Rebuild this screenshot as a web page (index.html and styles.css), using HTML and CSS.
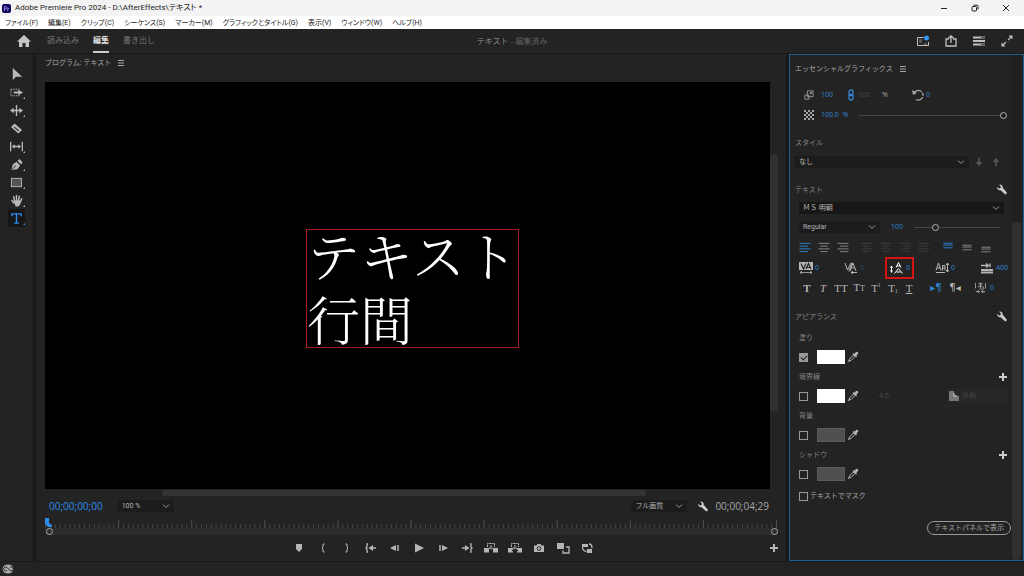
FILE: index.html
```html
<!DOCTYPE html>
<html lang="ja">
<head>
<meta charset="utf-8">
<title>Adobe Premiere Pro 2024</title>
<link rel="stylesheet" href="styles.css">
</head>
<body>
<svg class="defs" aria-hidden="true">
  <symbol id="chev" viewBox="0 0 8 8"><path d="M1 2.5l3 3 3-3" fill="none" stroke="currentColor"/></symbol>
  <symbol id="menu" viewBox="0 0 8 8"><path d="M1 1.500h6M1 4h6M1 6.500h6" stroke="currentColor"/></symbol>
  <symbol id="plus" viewBox="0 0 8 8"><path d="M4 0v8M0 4h8" stroke="currentColor" stroke-width="2"/></symbol>
  <symbol id="wrench" viewBox="0 0 12 12"><path d="M1 3l2 2 1.800-.5.4-2L3.500.8C5.500.2 7.500 1.500 7.300 4l4.200 5c.8 1.500-.8 2.800-2 1.800L5 6.800C3 7.300.8 5.500 1 3z" fill="currentColor"/></symbol>
  <symbol id="dropper" viewBox="0 0 12 12"><path d="M2 10l.5-2 4-4L8 5.500l-4 4z" fill="none" stroke="currentColor"/><path d="M5.500 3l1-1 1 .7L9 1c1.200-1 3 .8 2 2L9.400 4.500l.6 1-1 1z" fill="currentColor"/><path d="M1 11l1-1.500" stroke="currentColor"/></symbol>
  <symbol id="lines" viewBox="0 0 12 12"><path d="M0 1.500h12M0 4.500h9M0 7.500h12M0 10.500h9" stroke="currentColor"/></symbol>
  <symbol id="linesc" viewBox="0 0 12 12"><path d="M0 1.500h12M2 4.500h8M0 7.500h12M2 10.500h8" stroke="currentColor"/></symbol>
  <symbol id="linesr" viewBox="0 0 12 12"><path d="M0 1.500h12M3 4.500h9M0 7.500h12M3 10.500h9" stroke="currentColor"/></symbol>
  <symbol id="lines3" viewBox="0 0 12 12"><path d="M1 3.500h10M1 5.500h10M1 8.500h10" stroke="currentColor"/></symbol>
</svg>

<header class="titlebar">
  <svg class="logo" viewBox="0 0 9 9"><rect width="9" height="9" rx="2" fill="#12055c"/><path d="M2.500 7V2.500h1c1.800 0 1.800 2.300 0 2.300h-1M5.700 7V4.300M5.700 5.200q.3-.8 1.300-.8" fill="none" stroke="#a9a0f5" stroke-width=".8"/></svg>
  <h1 class="title">Adobe Premiere Pro 2024 - D:\AfterEffects\テキスト *</h1>
  <div class="winbtns">
    <button aria-label="最小化"><svg viewBox="0 0 8 8"><path d="M1 4.500h6" stroke="currentColor"/></svg></button>
    <button aria-label="元に戻す"><svg viewBox="0 0 8 8"><rect x="1" y="2.500" width="4.500" height="4.500" rx="1" fill="none" stroke="currentColor"/><path d="M2.500 1.200H6q1 0 1 1v3.300" fill="none" stroke="currentColor"/></svg></button>
    <button aria-label="閉じる"><svg viewBox="0 0 8 8"><path d="M1 1l6 6M7 1L1 7" stroke="currentColor"/></svg></button>
  </div>
</header>
<nav class="menubar">
  <button>ファイル(F)</button><button>編集(E)</button><button>クリップ(C)</button><button>シーケンス(S)</button><button>マーカー(M)</button><button>グラフィックとタイトル(G)</button><button>表示(V)</button><button>ウィンドウ(W)</button><button>ヘルプ(H)</button>
</nav>

<div class="appbar">
  <nav class="tabs">
    <button class="home" aria-label="ホーム"><svg viewBox="0 0 14 12"><path d="M7 0L0 6.500h2V12h3.500V8h3v4H12V6.500h2z" fill="currentColor"/></svg></button>
    <button>読み込み</button><button class="active">編集</button><button>書き出し</button>
  </nav>
  <p class="doc">テキスト <span>- 編集済み</span></p>
  <div class="appicons">
    <button aria-label="ワークスペース"><svg viewBox="0 0 12 12"><path d="M6.500 2.500h-6v8h11V7" fill="none" stroke="currentColor"/><path d="M2 5h3M2 7h3M7 9h3" stroke="#888"/><circle cx="9.500" cy="3" r="2.500" fill="#2f96f3"/></svg></button>
    <button aria-label="クイック書き出し"><svg viewBox="0 0 12 12"><path d="M4 4H1v7h10V4H8M6 8V1M3.500 3.200L6 .8l2.500 2.400" fill="none" stroke="currentColor" stroke-width="1.300"/></svg></button>
    <button aria-label="ワークスペース設定"><svg viewBox="0 0 12 12"><path d="M0 2.500h12M0 6h12M0 9.500h12" stroke="currentColor" stroke-width="2"/><path d="M8 2.500h4M8 9.500h4" stroke="#555"/></svg></button>
    <button aria-label="全画面"><svg viewBox="0 0 12 12"><path d="M7 5l3-3M5 7l-3 3" stroke="currentColor" stroke-width="1.300"/><path d="M7.500.5h4v4zM.5 7.500v4h4z" fill="currentColor"/></svg></button>
  </div>
</div>

<main class="workspace">
  <aside class="tools">
    <button aria-label="選択ツール"><svg viewBox="0 0 14 14"><path d="M3 0v13l3.500-3.500H13z" fill="currentColor"/></svg></button>
    <button class="more" aria-label="トラックの前方選択"><svg viewBox="0 0 14 14"><path d="M1 3.500h9v1M1 3.500v7h9v-1" fill="none" stroke="currentColor" stroke-dasharray="1.500 1"/><path d="M4 6h5V4l5 3-5 3V8H4z" fill="currentColor"/></svg></button>
    <button class="more" aria-label="リップルツール"><svg viewBox="0 0 14 14"><path d="M7 1v12M2 7h10" stroke="currentColor" stroke-width="1.500"/><path d="M0 7l4-3v6zM14 7l-4-3v6z" fill="currentColor"/></svg></button>
    <button aria-label="レーザーツール"><svg viewBox="0 0 14 14"><path d="M5 1.500l8 7-4 4-8-7z" fill="currentColor"/><path d="M4.500 5.500l5 4" stroke="#232323" stroke-width="1.200"/></svg></button>
    <button class="more" aria-label="スリップツール"><svg viewBox="0 0 14 14"><path d="M.7 2v10M13.300 2v10M4 7h6" stroke="currentColor" stroke-width="1.400"/><path d="M2 7l3-2.500v5zM12 7L9 4.500v5z" fill="currentColor"/></svg></button>
    <button class="more" aria-label="ペンツール"><svg viewBox="0 0 14 14"><path d="M1.500 13L3 7l4-3 4 4-3 4zM8 3l2-2 3.500 3.500L12 7z" fill="currentColor"/><path d="M2 12.500L6.500 8" stroke="#232323"/></svg></button>
    <button class="more" aria-label="長方形ツール"><svg viewBox="0 0 14 14"><rect x="1.500" y="2.500" width="11" height="9" fill="#555" stroke="currentColor"/></svg></button>
    <button class="more" aria-label="手のひらツール"><svg viewBox="0 0 14 14"><path d="M5 8L4 3M7 7.500V1.500M9 8l1-5.500M11 9l1.500-4M4.500 10L2 7" fill="none" stroke="currentColor" stroke-width="1.600" stroke-linecap="round"/><path d="M4 7h7.500l-.5 4-2 2.500H6z" fill="currentColor"/></svg></button>
    <button class="more selected" aria-label="横書き文字ツール"><svg viewBox="0 0 14 14"><path d="M2 4.500V2h10v2.500M7 2v10M4.500 12h5" fill="none" stroke="currentColor" stroke-width="1.500"/></svg></button>
  </aside>

  <section class="program">
    <h2 class="paneltitle">プログラム: テキスト <svg><use href="#menu"/></svg></h2>
    <div class="monitor">
      <div class="screen"><p class="caption"><span>テキスト<br>行間</span></p></div>
      <div class="vscroll"><i></i></div>
    </div>
    <div class="hscroll"><i></i></div>
    <div class="timerow">
      <time class="current">00;00;00;00</time>
      <label class="pick zoomsel"><select aria-label="ズーム"><option>100 %</option></select><svg><use href="#chev"/></svg></label>
      <label class="pick quality"><select aria-label="再生時の解像度"><option>フル画質</option></select><svg><use href="#chev"/></svg></label>
      <button class="wrench" aria-label="設定"><svg><use href="#wrench"/></svg></button>
      <time>00;00;04;29</time>
    </div>
    <div class="ruler">
      <svg class="ticks" viewBox="0 0 725 10" preserveAspectRatio="none"><path d="M0 8h725" stroke="#484848" stroke-width="4" stroke-dasharray="1 3.820"/><path d="M72.300 5h652" stroke="#4c4c4c" stroke-width="9" stroke-dasharray="1 71.300"/></svg>
      <div class="range"><i></i><i></i></div>
      <svg class="playhead" viewBox="0 0 7 9"><path d="M0 0h4v5l3 2v2H3L0 6z" fill="#2d8ceb"/></svg>
    </div>
    <div class="transport">
      <div class="keys">
        <button aria-label="マーカー"><svg viewBox="0 0 14 12"><path d="M4 2h6v5L7 10 4 7z" fill="currentColor"/></svg></button>
        <button aria-label="インをマーク"><svg viewBox="0 0 14 12"><path d="M8.500 2H7v3L6 6l1 1v3h1.500" fill="none" stroke="currentColor"/></svg></button>
        <button aria-label="アウトをマーク"><svg viewBox="0 0 14 12"><path d="M5.500 2H7v3l1 1-1 1v3H5.500" fill="none" stroke="currentColor"/></svg></button>
        <button aria-label="インへ移動"><svg viewBox="0 0 14 12"><path d="M4 2H3v3L2 6l1 1v3h1M7 6h5" fill="none" stroke="currentColor" stroke-width="1.300"/><path d="M4.500 6L9 3v6z" fill="currentColor"/></svg></button>
        <button aria-label="1フレーム前へ"><svg viewBox="0 0 14 12"><path d="M2 6l6-3v6z" fill="currentColor"/><path d="M10 3v6" stroke="currentColor" stroke-width="1.500"/></svg></button>
        <button aria-label="再生"><svg viewBox="0 0 14 12"><path d="M3 1.500L12 6l-9 4.500z" fill="currentColor"/></svg></button>
        <button aria-label="1フレーム先へ"><svg viewBox="0 0 14 12"><path d="M12 6L6 3v6z" fill="currentColor"/><path d="M4 3v6" stroke="currentColor" stroke-width="1.500"/></svg></button>
        <button aria-label="アウトへ移動"><svg viewBox="0 0 14 12"><path d="M10 2h1v3l1 1-1 1v3h-1M2 6h5" fill="none" stroke="currentColor" stroke-width="1.300"/><path d="M9.500 6L5 3v6z" fill="currentColor"/></svg></button>
        <button aria-label="リフト"><svg viewBox="0 0 14 12"><path d="M0 6h5v4.500H0zM9 6h5v4.500H9z" fill="currentColor"/><path d="M3.500 5V1.500h7V5M7 3v5M5 6h4" fill="none" stroke="currentColor" stroke-dasharray="2 .5"/></svg></button>
        <button aria-label="抽出"><svg viewBox="0 0 14 12"><path d="M0 6h5v1.500L3.500 8.500l1.500 1v1H0zM14 6H9v1.500l1.500 1-1.500 1v1h5z" fill="currentColor"/><path d="M3.500 5V1.500h7V5M7 3v5M5 6h4" fill="none" stroke="currentColor" stroke-dasharray="2 .5"/></svg></button>
        <button aria-label="フレームを書き出し"><svg viewBox="0 0 14 12"><path d="M2 3.500h2.500L5.500 2h3l1 1.500H12V10H2z" fill="currentColor"/><circle cx="7" cy="6.500" r="1.800" fill="none" stroke="#232323"/></svg></button>
        <button aria-label="比較表示"><svg viewBox="0 0 14 12"><path d="M1 1h7v6H1z" fill="currentColor"/><path d="M10 5h3v6H7V8.500" fill="none" stroke="currentColor" stroke-width="1.300"/></svg></button>
        <button aria-label="プロキシの切り替え"><svg viewBox="0 0 14 12"><path d="M2 2h6v3H2zM7 7h5v4H7z" fill="currentColor"/><path d="M9 2q3 0 3 4M2.500 5q0 4 4 4.500" fill="none" stroke="currentColor" stroke-width="1.300"/></svg></button>
      </div>
      <button class="add" aria-label="ボタンエディター"><svg><use href="#plus"/></svg></button>
    </div>
  </section>

  <section class="graphics">
    <div class="body">
      <h2 class="paneltitle">エッセンシャルグラフィックス <svg><use href="#menu"/></svg></h2>
      <div class="row scale">
        <svg viewBox="0 0 12 12"><path d="M4 1h7v7H4zM1 6h5v5H1zM7 5l2-2M7 3h2v2" fill="none" stroke="currentColor"/></svg>
        <b>100</b>
        <svg class="blue" viewBox="0 0 12 12"><rect x="4" y="1" width="4" height="5.500" rx="2" fill="none" stroke="currentColor" stroke-width="1.300"/><rect x="4" y="5.500" width="4" height="5.500" rx="2" fill="none" stroke="currentColor" stroke-width="1.300"/></svg>
        <span class="dim">100</span><span>%</span>
        <svg viewBox="0 0 12 12"><path d="M2 4a4.800 4.800 0 1 1 2 6.500" fill="none" stroke="currentColor" stroke-width="1.300" stroke-dasharray="9 1 3 1"/><path d="M0 1l1 5 4-2z" fill="currentColor"/></svg>
        <b>0</b>
      </div>
      <div class="row opacity">
        <svg viewBox="0 0 10 10"><path d="M0 1h10M0 5h10M0 9h10" stroke="currentColor" stroke-width="2" stroke-dasharray="2 2"/><path d="M2 3h8M2 7h8" stroke="currentColor" stroke-width="2" stroke-dasharray="2 2"/></svg>
        <b>100.0 &nbsp;%</b>
        <input type="range" aria-label="不透明度" value="100">
      </div>
      <h3 class="line">スタイル</h3>
      <div class="row style">
        <label class="pick"><select aria-label="スタイル"><option>なし</option></select><svg><use href="#chev"/></svg></label>
        <button aria-label="下へ"><svg viewBox="0 0 12 12"><path d="M6 1v6" stroke="currentColor" stroke-width="2"/><path d="M2 6h8l-4 5z" fill="currentColor"/></svg></button>
        <button aria-label="上へ"><svg viewBox="0 0 12 12"><path d="M6 11V5" stroke="currentColor" stroke-width="2"/><path d="M2 6h8L6 1z" fill="currentColor"/></svg></button>
      </div>
      <h3 class="line">テキスト <button class="wrench" aria-label="テキスト設定"><svg><use href="#wrench"/></svg></button></h3>
      <div class="row font"><label class="pick"><select aria-label="フォント"><option>ＭＳ 明朝</option></select><svg><use href="#chev"/></svg></label></div>
      <div class="row weight">
        <label class="pick"><select aria-label="フォントスタイル"><option>Regular</option></select><svg><use href="#chev"/></svg></label>
        <b>100</b>
        <input type="range" aria-label="フォントサイズ" value="23">
      </div>
      <div class="row align">
        <div><button class="blue" aria-label="左揃え"><svg><use href="#lines"/></svg></button><button aria-label="中央揃え"><svg><use href="#linesc"/></svg></button><button aria-label="右揃え"><svg><use href="#linesr"/></svg></button></div>
        <div class="dim"><button aria-label="均等配置（左）"><svg><use href="#lines"/></svg></button><button aria-label="均等配置（中央）"><svg><use href="#linesc"/></svg></button><button aria-label="均等配置"><svg><use href="#linesr"/></svg></button><button aria-label="両端揃え"><svg><use href="#lines"/></svg></button></div>
        <div class="vert"><button class="blue" aria-label="上揃え"><svg><use href="#lines3"/></svg></button><button aria-label="中央"><svg><use href="#lines3"/></svg></button><button aria-label="下揃え"><svg><use href="#lines3"/></svg></button></div>
      </div>
      <div class="row spacing">
        <div><svg viewBox="0 0 14 12"><path d="M0 0h14v8H0z" fill="currentColor"/><path d="M2 1.500L4.500 7 7 1.500M7 7l2.500-5.500L12 7M8 5.500h3" fill="none" stroke="#232323" stroke-width="1.200"/><path d="M1 10.500h12M3 9l-2 1.500L3 12M11 9l2 1.500-2 1.500" fill="none" stroke="currentColor" stroke-width=".8"/></svg><b>0</b></div>
        <div><svg viewBox="0 0 14 12"><path d="M1 1l2.500 7L7 1M6 9l3-8 3 8M7.500 6h3M8 .5l-3 9" fill="none" stroke="currentColor"/><path d="M7 10.500h6M9 9l-2 1.500L9 12" fill="none" stroke="currentColor"/></svg><b class="dimblue">0</b></div>
        <div class="leading"><svg viewBox="0 0 14 12"><path d="M6 5.500L8.500.5l2.500 5M7 4h3M4.500 11.500l4-5 4 5M6.500 10h4" fill="none" stroke="currentColor"/><path d="M1.500 5v4" stroke="currentColor"/><path d="M0 6l1.500-2.500L3 6zM0 8.500l1.500 2.500L3 8.500z" fill="currentColor"/></svg><b>0</b></div>
        <div><svg viewBox="0 0 14 12"><path d="M1 8.500L3.500 1 6 8.500M2 6h3M7.500 8.500V3.500h2.500v5M7.500 6H10M1 10.500h9" fill="none" stroke="currentColor"/><path d="M12.500 1v9M11 3l1.500-2L14 3M11 8l1.500 2L14 8" fill="none" stroke="currentColor"/></svg><b>0</b></div>
        <div><svg viewBox="0 0 14 12"><path d="M1 3.500h7M6 1.500l2.500 2L6 5.500M10 1.500v4" fill="none" stroke="currentColor" stroke-width="1.300"/><path d="M1 8h12M1 10.500h12" stroke="currentColor" stroke-width="1.800"/></svg><b>400</b></div>
      </div>
      <div class="row faux">
        <button><strong>T</strong></button><button><em>T</em></button><button>TT</button><button><span>T<small>T</small></span></button><button>T<sup>1</sup></button><button>T<sub>1</sub></button><button><u>T</u></button>
        <button class="blue dir">▸¶</button><button class="dir">¶◂</button>
        <div><svg viewBox="0 0 12 12"><path d="M.5 1v6M11.500 1v6M3.500 2h5M6 .5v6M3 5.500q3-3 6 0T5 7.500" fill="none" stroke="currentColor" stroke-width=".9"/><path d="M1 10.500h3M8 10.500h3M3 9l2 1.500L3 12M9 9l-2 1.500L9 12" fill="none" stroke="currentColor"/></svg><b>0</b></div>
      </div>
      <h3 class="line">アピアランス <button class="wrench" aria-label="アピアランス設定"><svg><use href="#wrench"/></svg></button></h3>
      <div class="attrs">
        <h4>塗り</h4>
        <div class="attr"><input type="checkbox" aria-label="塗り" checked><button class="swatch white" aria-label="塗りのカラー"></button><button aria-label="スポイト"><svg><use href="#dropper"/></svg></button></div>
        <h4>境界線 <button aria-label="境界線を追加"><svg><use href="#plus"/></svg></button></h4>
        <div class="attr"><input type="checkbox" aria-label="境界線"><button class="swatch white" aria-label="境界線のカラー"></button><button aria-label="スポイト"><svg><use href="#dropper"/></svg></button><span class="dim width">4.0</span><label class="outer"><svg viewBox="0 0 12 12"><path d="M1 1h5v5h5v5H1z" fill="#777"/><path d="M6 3v3h3" fill="none" stroke="#ddd"/></svg><select aria-label="境界線の位置"><option>外側</option></select></label></div>
        <h4>背景</h4>
        <div class="attr"><input type="checkbox" aria-label="背景"><button class="swatch" aria-label="背景のカラー"></button><button aria-label="スポイト"><svg><use href="#dropper"/></svg></button></div>
        <h4>シャドウ <button aria-label="シャドウを追加"><svg><use href="#plus"/></svg></button></h4>
        <div class="attr"><input type="checkbox" aria-label="シャドウ"><button class="swatch" aria-label="シャドウのカラー"></button><button aria-label="スポイト"><svg><use href="#dropper"/></svg></button></div>
      </div>
      <label class="mask"><input type="checkbox">テキストでマスク</label>
      <button class="pill">テキストパネルで表示</button>
    </div>
    <div class="sidebar"><i></i></div>
  </section>
</main>
<footer class="status"><svg viewBox="0 0 12 10"><ellipse cx="6" cy="5" rx="5.500" ry="4.500" fill="#aaa"/><path d="M5 6.500a2 2 0 1 1 0-3l3 3a2 2 0 1 0 0-3" fill="none" stroke="#222"/></svg></footer>
</body>
</html>
```
FILE: styles.css
```css
* { box-sizing: border-box; margin: 0; padding: 0; }
body {
  display: flex; flex-direction: column; min-height: 100vh;
  background: #191919; color: #a6a6a6;
  font: 7px/12px "Open Sans", "Noto Sans CJK JP", sans-serif;
}
button, select, input { font: inherit; color: inherit; background: none; border: 0; appearance: none; border-radius: 0; }
button { display: flex; align-items: center; justify-content: center; }
svg { display: block; flex: none; width: 12px; height: 12px; }
h1, h2, h3, h4, b { font: inherit; }
.defs { width: 0; height: 0; position: absolute; }

.titlebar, .menubar { font-family: Roboto, "Noto Sans CJK JP", sans-serif; font-feature-settings: "palt"; color: #222; }
.titlebar { display: flex; align-items: center; height: 16px; background: #f3f3f3; padding-left: 2px; }
.logo { width: 9px; height: 9px; }
.title { flex: 1; margin-left: 4px; font-size: 8px; }
.winbtns { display: flex; gap: 23px; padding-right: 14px; }
.winbtns svg { width: 8px; height: 8px; }
.menubar { display: flex; align-items: center; gap: 10px; height: 13px; background: #fff; padding-left: 5px; }

.appbar { display: grid; grid-template-columns: 1fr auto 1fr; align-items: center; height: 24px; background: #232323; padding: 0 11px; font-size: 8px; }
.home svg { width: 14px; height: 12px; }
.tabs { display: flex; gap: 14px; padding-left: 6px; align-self: stretch; color: #777; }
.tabs button { border-bottom: 2px solid transparent; }
.tabs .home { color: #c4c4c4; margin-right: 2px; border: 0; }
.tabs .active { color: #ddd; border-color: #ccc; font-weight: bold; }
.doc { color: #888; }
.doc span { color: #606060; }
.appicons { display: flex; justify-content: flex-end; gap: 16px; color: #c0c0c0; }

.workspace { flex: 1; display: flex; gap: 3px; margin: 1px 0; }
.tools { width: 33px; background: #232323; padding: 11px 8px 0; color: #b8b8b8; }
.tools button { width: 17px; height: 18px; position: relative; }
.tools svg { width: 13px; height: 13px; }
.tools .more::after { content: ""; position: absolute; right: 0; bottom: 2px; border: 1px solid; border-left-color: transparent; border-top-color: transparent; }
.tools .selected { background: #171717; color: #2d8ceb; }

.program { flex: 1; display: flex; flex-direction: column; background: #232323; padding: 0 8px 0 9px; }
.paneltitle { display: flex; gap: 6px; align-items: center; height: 27px; }
.program .paneltitle { height: 28px; padding-bottom: 10px; }
.paneltitle svg { width: 8px; height: 8px; }
.monitor { flex: 1; display: flex; }
.screen { flex: 1; background: #000; position: relative; }
.caption { position: absolute; left: 36%; top: 36%; border: 1px solid #a01c20; color: #fff; font: 300 53px/64px "Noto Serif CJK JP", "Noto Sans CJK JP", serif; display: flex; }
.caption span { margin: -8px 0 -3px; }
.vscroll { width: 8px; padding-top: 72px; }
.vscroll i { display: block; height: 257px; background: #303030; border-radius: 3px; }
.hscroll { height: 8px; padding: 1px 18% 0 16%; }
.hscroll i { display: block; height: 6px; background: #333; border-radius: 2px; }

.timerow { display: flex; align-items: center; height: 18px; padding: 0 9px 0 4px; font-size: 10px; }
.current { color: #2d8ceb; }
.pick { display: flex; align-items: center; background: #1c1c1c; height: 12px; padding-right: 4px; font-size: 7px; font-family: Roboto, "Noto Sans CJK JP", sans-serif; color: #b5b5b5; }
.pick select { flex: 1; min-width: 0; height: 12px; padding-left: 4px; }
.pick svg { width: 8px; height: 8px; color: #999; }
.zoomsel { width: 56px; margin-left: 15px; }
.quality { width: 56px; margin-left: auto; }
.wrench { margin: 0 7px 0 10px; color: #ccc; }
.wrench svg { width: 11px; height: 11px; }

.ruler { position: relative; padding-top: 4px; }
.ticks { width: 100%; height: 9px; }
.range { display: flex; justify-content: space-between; align-items: center; height: 7px; background: #2c2c2c; padding-left: 1px; }
.range i { width: 7px; height: 7px; border: 1px solid #aaa; border-radius: 50%; }
.playhead { position: absolute; left: 0; top: 3px; width: 7px; height: 9px; }
.transport { display: flex; align-items: center; height: 26px; color: #b5b5b5; }
.keys { flex: 1; display: flex; justify-content: center; gap: 10px; padding-left: 70px; }
.keys svg { width: 14px; height: 12px; }
.add svg { width: 8px; height: 8px; }

.graphics { flex: 0 0 235px; display: flex; border: 1px solid #1f5f90; background: #232323; }
.body { flex: 1; min-width: 0; padding-left: 5px; }
.sidebar { width: 9px; padding-top: 167px; margin: 0 2px 0 1px; background: #1f1f1f; }
.sidebar i { display: block; height: 100%; background: #303030; border-radius: 4px; }
.row { display: grid; align-items: center; height: 20px; padding-left: 4px; }
b, .blue { color: #2f86d4; }
.dim { color: #4c4c4c; }
.dimblue { color: #29496a; }
.scale { grid-template-columns: 22px 24px 13px 24px 30px 14px auto; margin-top: 3px; }
.opacity { grid-template-columns: 22px 38px 148px; }
.opacity svg, .scale svg:first-child { width: 10px; height: 10px; margin-left: 5px; }
input[type=range] { width: 100%; height: 8px; background: linear-gradient(#484848, #484848) center / 100% 1px no-repeat; }
input[type=range]::-webkit-slider-thumb { appearance: none; width: 7px; height: 7px; border: 1px solid #b5b5b5; border-radius: 50%; background: #232323; }
.line { display: flex; align-items: center; justify-content: space-between; height: 20px; margin-top: 7px; border-top: 1px solid #1f1f1f; color: #858585; }
.line .wrench { margin: 0 4px 0 0; }
.style { grid-template-columns: 174px 20px 14px; padding-left: 0; color: #555; }
.style svg { width: 10px; height: 10px; }
.style .pick svg { width: 8px; height: 8px; }
.font { height: 18px; padding-right: 7px; }
.font .pick { background: #171717; }
.weight { grid-template-columns: 81px 20px 86px; column-gap: 0; }
.weight b { margin: 0; }
.weight { grid-template-columns: 81px 34px 86px; }
.weight b { text-align: center; }
.align { display: flex; gap: 12px; color: #8c8c8c; }
.align > div { display: flex; gap: 7px; }
.align .dim { color: #3d3d3d; }
.align .vert button:first-child { padding-bottom: 4px; }
.align .vert button:last-child { padding-top: 4px; }
.align svg { width: 12px; height: 11px; }
.spacing { grid-template-columns: 45px 41px 50px 45px auto; color: #b5b5b5; }
.spacing > div { display: flex; align-items: center; gap: 2px; }
.spacing svg { width: 14px; height: 12px; }
.spacing .leading { width: 29px; height: 22px; border: 2px solid #d51414; padding-left: 3px; color: #fff; }
.faux { grid-template-columns: 16px 16px 20px 16px 18px 16px 16px 9px 20px 18px 1fr; color: #b5b5b5; font: 11px/12px "Liberation Serif", serif; height: 22px; }
.faux .dir { font: 10px/12px "DejaVu Sans", sans-serif; }
.faux button:nth-child(8) { grid-column: 9; }
.faux small { font-size: 8px; }
.faux sup, .faux sub { font-size: 6px; line-height: 6px; }
.faux sup { align-self: flex-start; }
.faux sub { align-self: flex-end; }
.faux div { display: flex; gap: 4px; margin-left: 11px; }
.faux div b { font: 7px/12px "Open Sans", sans-serif; }
.faux svg { width: 11px; height: 11px; }
.attrs { margin-top: 2px; padding: 0 4px; }
.attrs h4 { display: flex; align-items: center; justify-content: space-between; height: 20px; color: #858585; }
.attrs h4 svg { width: 8px; height: 8px; color: #ccc; }
.attr { display: flex; align-items: center; height: 19px; border-bottom: 1px solid #272727; }
input[type=checkbox] { width: 9px; height: 9px; border: 1px solid #999; flex: none; }
input[type=checkbox]:checked { background: #999; position: relative; }
input[type=checkbox]:checked::after { content: ""; position: absolute; left: 2px; top: 0; width: 3px; height: 5px; border: solid #222; border-width: 0 1px 1px 0; transform: rotate(45deg); }
.swatch { width: 28px; height: 14px; margin: 0 2px 0 9px; background: #505050; border: 1px solid #5c5c5c; }
.white { background: #fff; border-color: #fff; }
.attr svg { color: #b5b5b5; }
.width { margin-left: 20px; }
.outer { display: flex; align-items: center; width: 59px; height: 14px; margin-left: auto; background: #272727; color: #444; }
.outer select { padding-left: 2px; }
.mask { display: flex; align-items: center; gap: 2px; height: 20px; margin-top: 2px; padding-left: 4px; }
.pill { height: 14px; margin: 15px 0 0 auto; padding: 0 6px; border: 1px solid #999; border-radius: 7px; }
.status { height: 14px; padding: 2px; background: #232323; }
.status svg { height: 10px; }
```
